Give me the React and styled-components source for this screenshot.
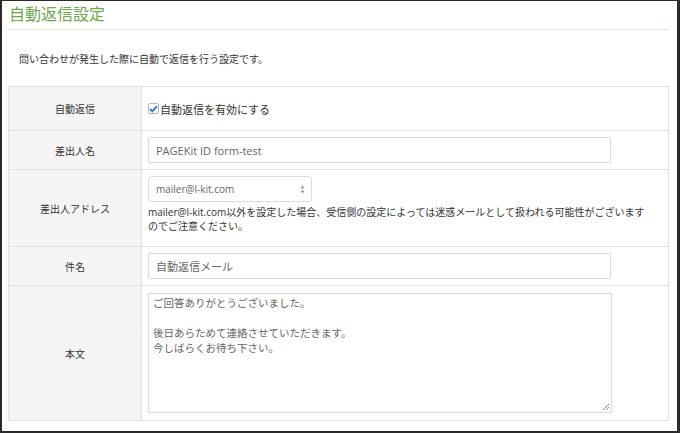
import styled, { createGlobalStyle } from 'styled-components'

const GlobalStyle = createGlobalStyle`
  html, body {
    margin: 0;
    padding: 0;
    background: #fff;
  }
  body {
    font-family: "Open Sans", "Noto Sans CJK JP", sans-serif;
    color: #333;
  }
`

const Frame = styled.div`
  box-sizing: border-box;
  width: 680px;
  height: 433px;
  border-style: solid;
  border-color: #2a2a2a;
  border-width: 1px 3px 2px 2px;
  padding: 0 8px 0 6px;
  overflow: hidden;
  background: #fff;
`

const Title = styled.h1`
  margin: 0;
  padding: 4px 0 5px 1px;
  font-size: 16px;
  line-height: 19px;
  font-weight: 400;
  color: #6aaa4b;
  border-bottom: 1px solid #dcefd4;
`

const Lead = styled.p`
  margin: 22px 0 20px 11px;
  font-size: 10px;
  line-height: 14px;
  color: #333;
`

const Table = styled.table`
  width: 100%;
  border-collapse: collapse;
  table-layout: fixed;
`

const Row = styled.tr`
  height: ${props => props.$h}px;
`

const Label = styled.th`
  width: 132px;
  background: #f5f5f5;
  border: 1px solid #e2e2e2;
  font-size: 10px;
  font-weight: 400;
  color: #333;
  text-align: center;
  vertical-align: middle;
  padding: 0;
`

const Cell = styled.td`
  border: 1px solid #e2e2e2;
  padding: 0 6px;
  vertical-align: ${props => props.$top ? 'top' : 'middle'};
  padding-top: ${props => props.$top ? '6px' : '0'};
`

const CheckLine = styled.label`
  display: flex;
  align-items: center;
  gap: 1px;
  font-size: 11px;
  color: #333;
`

const Box = styled.span`
  box-sizing: border-box;
  width: 11px;
  height: 11px;
  border: 1px solid #b9b9b9;
  border-radius: 2px;
  background: #fff;
  display: flex;
  align-items: center;
  justify-content: center;
`

const TextBox = styled.div`
  box-sizing: border-box;
  width: 463px;
  height: 26px;
  border: 1px solid #dcdcdc;
  border-radius: 2px;
  padding: 0 7px;
  display: flex;
  align-items: center;
  font-size: 11px;
  color: #666;
  background: #fff;
`

const Select = styled.div`
  box-sizing: border-box;
  width: 164px;
  height: 26px;
  border: 1px solid #dcdcdc;
  border-radius: 4px;
  padding: 0 6px 0 7px;
  display: flex;
  align-items: center;
  justify-content: space-between;
  font-size: 10px;
  color: #666;
  background: #fff;
`

const Note = styled.p`
  margin: 3px 10px 0 0;
  font-size: 10px;
  line-height: 14px;
  color: #333;
`

const TextArea = styled.div`
  position: relative;
  box-sizing: border-box;
  width: 464px;
  height: 120px;
  border: 1px solid #dcdcdc;
  padding: 2px 4px;
  font-size: 10.5px;
  line-height: 15px;
  color: #666;
  background: #fff;
`

const Grip = styled.svg`
  position: absolute;
  right: 1px;
  bottom: 1px;
`

const Arrows = () => (
  <svg width="5" height="9" viewBox="0 0 5 9">
    <path d="M2.5 0.5 L4.5 3.5 H0.5 Z M2.5 8.5 L4.5 5.5 H0.5 Z" fill="#999" />
  </svg>
)

export default function App() {
  return (
    <>
      <GlobalStyle />
      <Frame>
        <Title>自動返信設定</Title>
        <Lead>問い合わせが発生した際に自動で返信を行う設定です。</Lead>
        <Table>
          <tbody>
            <Row $h={44}>
              <Label>自動返信</Label>
              <Cell>
                <CheckLine>
                  <Box>
                    <svg width="9" height="8" viewBox="0 0 9 8">
                      <path d="M1 4 L3.4 6.4 L8 1.2" stroke="#2b7fd6" strokeWidth="2" fill="none" />
                    </svg>
                  </Box>
                  自動返信を有効にする
                </CheckLine>
              </Cell>
            </Row>
            <Row $h={39}>
              <Label>差出人名</Label>
              <Cell>
                <TextBox>PAGEKit ID form-test</TextBox>
              </Cell>
            </Row>
            <Row $h={77}>
              <Label>差出人アドレス</Label>
              <Cell $top>
                <Select>
                  mailer@l-kit.com
                  <Arrows />
                </Select>
                <Note>
                  mailer@l-kit.com以外を設定した場合、受信側の設定によっては迷惑メールとして扱われる可能性がございますのでご注意ください。
                </Note>
              </Cell>
            </Row>
            <Row $h={39}>
              <Label>件名</Label>
              <Cell>
                <TextBox>自動返信メール</TextBox>
              </Cell>
            </Row>
            <Row $h={135}>
              <Label>本文</Label>
              <Cell>
                <TextArea>
                  ご回答ありがとうございました。
                  <br />
                  <br />
                  後日あらためて連絡させていただきます。
                  <br />
                  今しばらくお待ち下さい。
                  <Grip width="8" height="8" viewBox="0 0 8 8">
                    <path d="M7 1 L1 7 M7 4 L4 7" stroke="#999" strokeWidth="1" />
                  </Grip>
                </TextArea>
              </Cell>
            </Row>
          </tbody>
        </Table>
      </Frame>
    </>
  )
}
